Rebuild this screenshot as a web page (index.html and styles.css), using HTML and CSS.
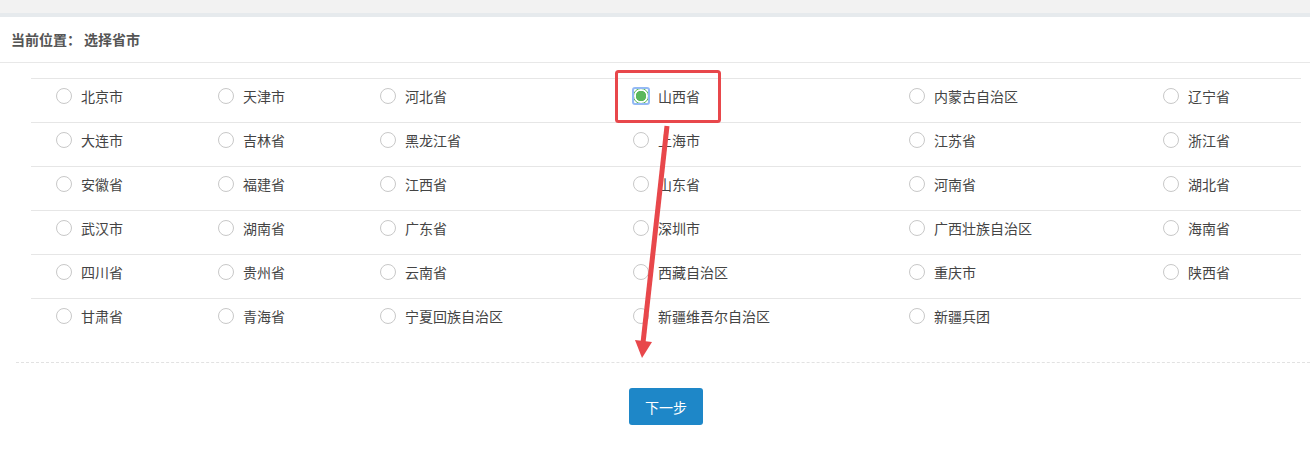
FILE: index.html
```html
<!DOCTYPE html>
<html lang="zh-CN">
<head>
  <meta charset="UTF-8">
  <title>选择省市</title>
  <link rel="stylesheet" href="styles.css">
</head>
<body>
  <div class="top-band"></div>
  <div class="crumb">当前位置<span class="colon">：</span>选择省市</div>
  <div class="content">
    <table class="prov-table">
      <tr>
        <td class="c1"><label class="rad"><span class="dot"></span>北京市</label></td>
        <td class="c2"><label class="rad"><span class="dot"></span>天津市</label></td>
        <td class="c3"><label class="rad"><span class="dot"></span>河北省</label></td>
        <td class="c4"><label class="rad on"><span class="dot"></span>山西省</label></td>
        <td class="c5"><label class="rad"><span class="dot"></span>内蒙古自治区</label></td>
        <td class="c6"><label class="rad"><span class="dot"></span>辽宁省</label></td>
      </tr>
      <tr>
        <td><label class="rad"><span class="dot"></span>大连市</label></td>
        <td><label class="rad"><span class="dot"></span>吉林省</label></td>
        <td><label class="rad"><span class="dot"></span>黑龙江省</label></td>
        <td><label class="rad"><span class="dot"></span>上海市</label></td>
        <td><label class="rad"><span class="dot"></span>江苏省</label></td>
        <td><label class="rad"><span class="dot"></span>浙江省</label></td>
      </tr>
      <tr>
        <td><label class="rad"><span class="dot"></span>安徽省</label></td>
        <td><label class="rad"><span class="dot"></span>福建省</label></td>
        <td><label class="rad"><span class="dot"></span>江西省</label></td>
        <td><label class="rad"><span class="dot"></span>山东省</label></td>
        <td><label class="rad"><span class="dot"></span>河南省</label></td>
        <td><label class="rad"><span class="dot"></span>湖北省</label></td>
      </tr>
      <tr>
        <td><label class="rad"><span class="dot"></span>武汉市</label></td>
        <td><label class="rad"><span class="dot"></span>湖南省</label></td>
        <td><label class="rad"><span class="dot"></span>广东省</label></td>
        <td><label class="rad"><span class="dot"></span>深圳市</label></td>
        <td><label class="rad"><span class="dot"></span>广西壮族自治区</label></td>
        <td><label class="rad"><span class="dot"></span>海南省</label></td>
      </tr>
      <tr>
        <td><label class="rad"><span class="dot"></span>四川省</label></td>
        <td><label class="rad"><span class="dot"></span>贵州省</label></td>
        <td><label class="rad"><span class="dot"></span>云南省</label></td>
        <td><label class="rad"><span class="dot"></span>西藏自治区</label></td>
        <td><label class="rad"><span class="dot"></span>重庆市</label></td>
        <td><label class="rad"><span class="dot"></span>陕西省</label></td>
      </tr>
      <tr>
        <td><label class="rad"><span class="dot"></span>甘肃省</label></td>
        <td><label class="rad"><span class="dot"></span>青海省</label></td>
        <td><label class="rad"><span class="dot"></span>宁夏回族自治区</label></td>
        <td><label class="rad"><span class="dot"></span>新疆维吾尔自治区</label></td>
        <td><label class="rad"><span class="dot"></span>新疆兵团</label></td>
        <td></td>
      </tr>
    </table>
    <div class="form-foot">
      <button class="next-btn">下一步</button>
    </div>
  </div>
  <!-- 标注：红框 + 箭头 -->
  <svg class="mark" width="1310" height="463" viewBox="0 0 1310 463">
    <rect x="616.5" y="71.5" width="103" height="50" rx="2" fill="none" stroke="#e8474b" stroke-width="3"/>
    <line x1="667" y1="126" x2="643" y2="343" stroke="#e8474b" stroke-width="5"/>
    <polygon points="635,340 652,342 642,358" fill="#e8474b"/>
  </svg>
</body>
</html>
```

FILE: styles.css
```css
html, body {
  margin: 0; padding: 0;
  background: #fff;
  font-family: "Noto Sans CJK SC", "Noto Sans", Arial, sans-serif;
  font-size: 14px; color: #444;
  position: relative;
}
.top-band { height: 13px; background: #f2f2f2; border-bottom: 4px solid #e6eaed; }
.crumb {
  height: 45px; line-height: 44px;
  padding-left: 11px;
  font-size: 14px; font-weight: bold; color: #555;
  border-bottom: 1px solid #e8e8e8;
}
.crumb .colon { padding-right: 3px; }
.content { padding: 15px 0 0 16px; }
.prov-table {
  margin-left: 15px; width: 1270px;
  border-collapse: collapse; table-layout: fixed;
}
.prov-table td {
  height: 34px; padding: 0 0 9px 25px;
  border-top: 1px solid #e6e6e6;
  vertical-align: middle;
}
.prov-table .c1, .prov-table .c2 { width: 137px; }
.prov-table .c3 { width: 228px; }
.prov-table .c4 { width: 251px; }
.prov-table .c5 { width: 229px; }
.rad { display: flex; align-items: center; gap: 9px; white-space: nowrap; }
.rad .dot {
  position: relative;
  width: 14px; height: 14px; border-radius: 50%;
  border: 1px solid #c8c8c8; background: #fff;
  flex-shrink: 0;
}
.rad.on .dot {
  border-color: #5cb85c;
  background: radial-gradient(circle, #5cb85c 0 5px, #fff 5.5px);
}
.rad.on .dot::after {
  content: '';
  position: absolute; left: -2px; top: -2px; right: -2px; bottom: -2px;
  border: 2px solid #93b9f4; border-radius: 3px;
}
.form-foot {
  margin-top: 20px;
  border-top: 1px dashed #e2e2e2;
  padding: 25px 0 0 6px;
  text-align: center;
}
.next-btn {
  width: 74px; height: 37px;
  background: #1e87c8; color: #fff;
  border: none; border-radius: 3px;
  font-family: inherit; font-size: 14px;
  cursor: pointer;
}
.mark { position: absolute; left: 0; top: 0; pointer-events: none; }
```
